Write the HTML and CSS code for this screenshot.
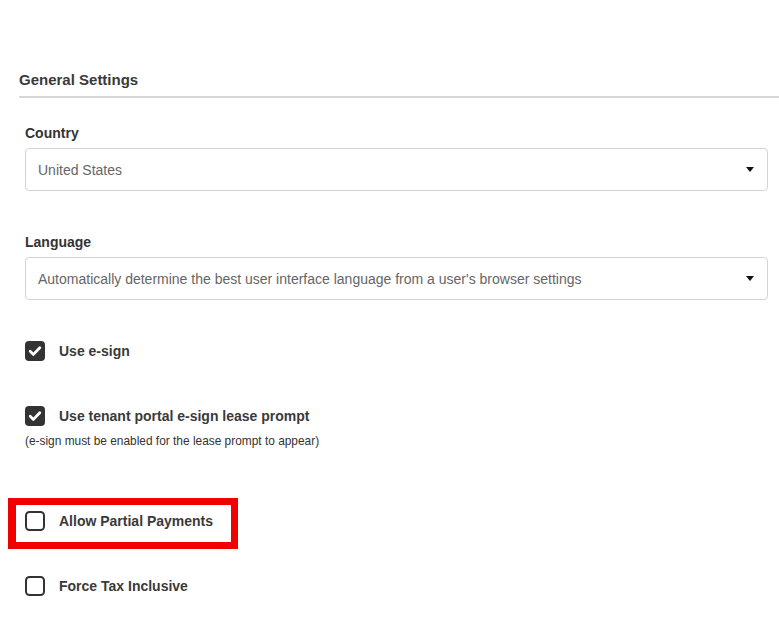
FILE: index.html
```html
<!DOCTYPE html>
<html lang="en">
<head>
<meta charset="utf-8">
<title>General Settings</title>
<link rel="stylesheet" href="styles.css">
</head>
<body>
<div class="page">
  <h2 class="section-title">General Settings</h2>
  <div class="form">
    <div class="field field-country">
      <label class="field-label">Country</label>
      <div class="select">
        <span class="select-value">United States</span>
        <span class="caret"></span>
      </div>
    </div>
    <div class="field field-language">
      <label class="field-label">Language</label>
      <div class="select">
        <span class="select-value">Automatically determine the best user interface language from a user's browser settings</span>
        <span class="caret"></span>
      </div>
    </div>

    <div class="check-row row-esign">
      <svg class="box" width="20" height="20" viewBox="0 0 20 20"><rect x="0" y="0" width="20" height="20" rx="4" fill="#333"/><path d="M5.2 10.3 L8.4 13.4 L14.8 6.8" fill="none" stroke="#fff" stroke-width="2.8" stroke-linecap="round" stroke-linejoin="round"/></svg>
      <span class="check-label">Use e-sign</span>
    </div>

    <div class="check-row row-tenant">
      <svg class="box" width="20" height="20" viewBox="0 0 20 20"><rect x="0" y="0" width="20" height="20" rx="4" fill="#333"/><path d="M5.2 10.3 L8.4 13.4 L14.8 6.8" fill="none" stroke="#fff" stroke-width="2.8" stroke-linecap="round" stroke-linejoin="round"/></svg>
      <span class="check-label">Use tenant portal e-sign lease prompt</span>
    </div>
    <p class="note">(e-sign must be enabled for the lease prompt to appear)</p>

    <div class="check-row row-partial">
      <span class="highlight"></span>
      <svg class="box" width="20" height="20" viewBox="0 0 20 20"><rect x="1" y="1" width="18" height="18" rx="3.5" fill="#fff" stroke="#333" stroke-width="2"/></svg>
      <span class="check-label">Allow Partial Payments</span>
    </div>

    <div class="check-row row-tax">
      <svg class="box" width="20" height="20" viewBox="0 0 20 20"><rect x="1" y="1" width="18" height="18" rx="3.5" fill="#fff" stroke="#333" stroke-width="2"/></svg>
      <span class="check-label">Force Tax Inclusive</span>
    </div>
  </div>
</div>
</body>
</html>
```

FILE: styles.css
```css
html, body {
  margin: 0;
  padding: 0;
  background: #fff;
}
body {
  font-family: "Liberation Sans", Arial, Helvetica, sans-serif;
  color: #333;
}
.page {
  padding: 71px 0 0 19px;
}
.section-title {
  margin: 0;
  font-size: 15px;
  line-height: 18px;
  font-weight: bold;
  color: #3a3a3a;
  padding-bottom: 7px;
  border-bottom: 2px solid #d6d6d6;
}
.form {
  padding: 0 11px 0 6px;
}
.field {
  display: flex;
  flex-direction: column;
}
.field-country {
  margin-top: 27px;
}
.field-language {
  margin-top: 43px;
}
.field-label {
  font-size: 14px;
  line-height: 17px;
  font-weight: bold;
  color: #333;
  margin-bottom: 6px;
}
.select {
  height: 43px;
  box-sizing: border-box;
  border: 1px solid #d4d4d4;
  border-radius: 4px;
  display: flex;
  align-items: center;
  justify-content: space-between;
  padding: 0 13px 0 12px;
}
.select-value {
  font-size: 14px;
  color: #666;
  white-space: nowrap;
}
.caret {
  width: 0;
  height: 0;
  border-left: 4px solid transparent;
  border-right: 4px solid transparent;
  border-top: 5px solid #111;
}
.check-row {
  position: relative;
  display: flex;
  align-items: center;
  height: 20px;
}
.box {
  flex: none;
  display: block;
}
.check-label {
  margin-left: 14px;
  font-size: 14px;
  font-weight: bold;
  color: #3a3a3a;
  line-height: 17px;
}
.row-esign {
  margin-top: 41px;
}
.row-tenant {
  margin-top: 45px;
}
.note {
  margin: 8px 0 0;
  font-size: 11.9px;
  line-height: 14px;
  color: #333;
}
.row-partial {
  margin-top: 63px;
}
.row-tax {
  margin-top: 45px;
}
.highlight {
  position: absolute;
  left: -17px;
  top: -13px;
  width: 230px;
  height: 51px;
  box-sizing: border-box;
  border: 7px solid #f00000;
  border-left-width: 8px;
  pointer-events: none;
}
```
